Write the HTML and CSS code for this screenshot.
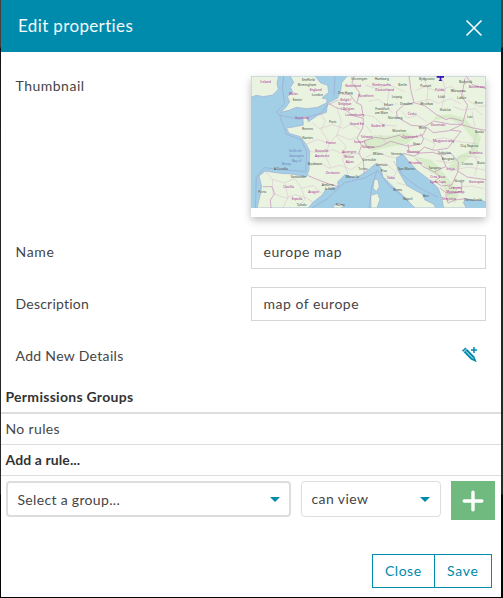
FILE: index.html
```html
<!DOCTYPE html>
<html lang="en">
<head>
<meta charset="utf-8">
<title>Edit properties</title>
<link rel="stylesheet" href="styles.css">
</head>
<body>
<main class="dialog">
  <header class="head">
    <h1>Edit properties</h1>
    <svg class="close" viewBox="0 0 18 18"><path d="M1.5 1.5l15 15M16.5 1.5l-15 15"/></svg>
  </header>
  <section class="fields">
    <div class="field field-thumb">
      <span class="thumbnail-label">Thumbnail</span>
      <div class="thumb">
        <svg class="map" viewBox="18 18 705 396" preserveAspectRatio="none">
          <rect class="sea" x="18" y="18" width="705" height="396"/>
          <g class="land">
            <path d="M306 18L290 38 287 62 278 84 248 99 244 127 218 136 190 155 184 138 173 139 175 165 150 170 124 174 132 190 166 200 184 224 194 243 192 300 184 320 140 312 106 310 61 303 42 318 50 350 45 377 36 414H190L204 397 232 375 242 359 280 350 278 336 300 314 332 325 356 310 372 298 391 282 407 292 414 320 441 347 475 377 500 404 510 414H574L564 401 540 390 531 371 514 363 486 347 469 319 457 297 454 264 474 252 489 272 517 302 558 333 580 355 590 385 596 414H664L655 397 665 386 690 392 710 391 723 397V18Z"/>
            <path d="M135 18L146 37 136 52 143 66 127 80 134 95 122 113 106 127 132 121 154 112 185 116 218 112 244 99 247 88 231 84 251 67 248 46 226 38 211 18Z"/>
            <path d="M18 18H101L96 40 100 58 83 75 55 80 34 76 18 82Z"/>
            <path d="M388 328L399 328 403 350 394 365 384 354ZM377 376L398 370 405 389 396 414H378ZM264 407L284 400 299 408 287 414H266Z"/>
          </g>
          <g class="hills">
            <path d="M358 213L386 195 433 197 479 186 512 202 485 222 434 230 382 242 356 229Z"/>
            <path d="M565 150L610 145 650 165 687 211 674 242 639 258 612 290 638 305 653 278 696 247 708 200 659 145 614 133 573 137Z"/>
            <path d="M480 252L515 265 556 306 586 321 606 380 630 400 642 370 603 318 560 270Z"/>
          </g>
          <g class="ferry">
            <path d="M116 18L112 55 119 100 94 126 104 136 165 148 228 130 247 105 281 90"/>
            <path d="M104 136L124 193 168 209 185 245 182 305 108 299 58 293 34 322 31 414M270 18L267 76M201 414L249 385 298 338 359 324 399 302 431 345 490 395"/>
            <path d="M445 273L476 318 520 352 579 382M396 302L380 350 373 414"/>
          </g>
          <g class="border">
            <path d="M250 100L274 113 303 121 324 137 355 145 353 174 336 204 350 226 341 250 355 271 358 311M187 316L218 329 249 341 281 350M54 350L81 350 89 371 76 390 78 414"/>
            <path d="M290 71L315 74 332 97 349 105 354 135M328 18L321 38 344 68 336 97M492 18L498 62 507 98 476 105 454 125 457 142 499 166 540 169 566 153 617 163 652 163 668 106 650 79 660 25"/>
            <path d="M507 98L539 107 572 132 603 149 618 144 653 153M356 213L391 202 420 207 462 196 480 206 534 195 545 172 565 188 613 182 650 164M356 213L370 235 408 228 437 214 490 229 529 222 536 206 526 190M489 222L492 246 520 247 538 231 568 241 608 235 648 184 616 180"/>
            <path d="M474 250L506 258 526 249 563 247 589 255 617 249 640 276 639 304 667 321 723 329M512 266L534 290 568 306 603 289 588 255M569 306L585 322 569 334 590 348 620 345 639 304M585 354L607 372 649 365 651 337M602 373L609 399 630 390 663 386M650 164L688 175 723 181M663 18L682 44 723 56"/>
          </g>
          <g class="region">
            <path d="M202 158L223 176 262 164 295 175 318 162 346 178M183 223L217 208 252 220 277 194 314 209 333 203M194 245L232 247 263 239 297 253 348 250M194 287L226 279 253 295 286 285 319 299 352 276M224 126L241 154 228 180 253 218 242 258 257 292M276 115L289 154 275 198 302 228 293 268 309 311"/>
            <path d="M61 303L82 328 117 338 150 326 170 354 205 347 232 371M82 328L84 371 123 384 151 374 185 384 204 397M120 339L129 382 113 414M169 355L180 387 157 414"/>
            <path d="M360 45L396 56 431 43 478 65M370 94L400 88 425 107 458 101M347 132L388 141 414 165 455 168M362 165L380 189M433 60L425 106 442 129M511 62L540 50 576 64 617 49 658 78M516 95L553 88 580 100 616 86 649 102M535 22L549 56 545 104M590 20L601 56 590 119M361 263L394 246 432 260 454 263M390 283L424 282 451 305M422 314L444 326 456 302M456 338L487 347M562 210L596 203 637 214 698 222M574 272L613 279 653 258 707 262M613 303L672 291 723 301M626 353L682 348 715 356M667 91L703 110 723 107M624 110L655 120 690 116 713 136M681 125L690 175M695 190L681 232 698 279 689 318M469 122L487 144 515 136 545 155M405 194L424 222M519 195L570 221 561 242"/>
          </g>
          <g class="town">
            <text x="170" y="32">Sheffield</text><text x="158" y="48">Birmingham</text><text x="200" y="79">London</text><text x="143" y="94">Exeter</text><text x="252" y="158">Paris</text><text x="171" y="180">Rennes</text><text x="172" y="206">Nantes</text><text x="188" y="286">Bordeaux</text><text x="87" y="300">A Coruña</text><text x="137" y="325">Santander</text><text x="40" y="368">Porto</text><text x="230" y="347">Andorra</text><text x="239" y="361">la Vella</text><text x="302" y="324">Marseille</text><text x="279" y="73">Den Haag</text><text x="319" y="30">Groningen</text><text x="389" y="30">Hamburg</text><text x="460" y="47">Berlin</text><text x="522" y="31">Bydgoszcz</text><text x="526" y="50">Poznań</text><text x="642" y="39">Białystok</text><text x="617" y="66">Warszawa</text><text x="440" y="84">Leipzig</text><text x="579" y="84">Łódź</text><text x="636" y="87">Lublin</text><text x="417" y="107">Erfurt</text><text x="465" y="106">Dresden</text><text x="526" y="104">Wrocław</text><text x="689" y="103">Rivne</text><text x="584" y="123">Kraków</text><text x="391" y="119">Frankfurt</text><text x="390" y="133">am Main</text><text x="429" y="148">Nürnberg</text><text x="666" y="143">Lviv</text><text x="521" y="177">Wien</text><text x="442" y="186">München</text><text x="690" y="189">Bacău</text><text x="504" y="224">Graz</text><text x="646" y="230">Cluj-Napoca</text><text x="384" y="254">Milano</text><text x="438" y="254">Venezia</text><text x="579" y="252">Subotica</text><text x="590" y="271">Beograd</text><text x="650" y="285">Craiova</text><text x="697" y="281">Bucu</text><text x="393" y="289">Genova</text><text x="407" y="307">Pisa</text><text x="460" y="300">San Marino</text><text x="551" y="298">Sarajevo</text><text x="628" y="336">Skopje</text><text x="445" y="363">Roma</text><text x="474" y="389">Napoli</text><text x="534" y="382">Bari</text><text x="656" y="392">Thessaloniki</text><text x="340" y="299">Torino</text><text x="352" y="272">Grenoble</text><text x="155" y="409">Toledo</text><text x="272" y="409">Palma</text>
          </g>
          <g class="country">
            <text x="46" y="38">Ireland</text><text x="132" y="74">Wales</text><text x="194" y="63">England</text><text x="150" y="146">Guernsey</text><text x="301" y="52">Nederland</text><text x="286" y="92">België /</text><text x="280" y="106">Belgique</text><text x="288" y="120">/ Belgien</text><text x="301" y="138">Luxembourg</text><text x="243" y="223">France</text><text x="210" y="247">Nouvelle-</text><text x="210" y="261">Aquitaine</text><text x="291" y="248">Auvergne</text><text x="298" y="263">Rhône</text><text x="302" y="278">Alpes</text><text x="242" y="311">Occitanie</text><text x="115" y="354">Castilla</text><text x="140" y="390">España</text><text x="190" y="368">Aragón</text><text x="348" y="205">Schweiz</text><text x="327" y="220">Suisse /</text><text x="351" y="235">Svizzera</text><text x="391" y="64">Deutschland</text><text x="382" y="47">Niedersachs.</text><text x="570" y="64">Polska</text><text x="488" y="135">Česko</text><text x="557" y="167">Slovensko</text><text x="472" y="204">Österreich</text><text x="564" y="215">Magyarország</text><text x="485" y="248">Slovenija</text><text x="491" y="281">Hrvatska</text><text x="604" y="299">Srbija</text><text x="673" y="253">România</text><text x="673" y="340">България</text><text x="427" y="328">Italia</text><text x="556" y="325">Crna Gora</text><text x="555" y="340">Црна Гора</text><text x="611" y="356">Северна</text><text x="604" y="370">Македонија</text><text x="591" y="389">Shqipëria</text><text x="340" y="82">Nordrhein</text><text x="314" y="166">Grand Est</text><text x="379" y="172">Baden-W.</text><text x="671" y="53">Волинська</text>
          </g>
          <g class="water"><text x="132" y="247">Golfe de</text><text x="132" y="261">Gascogne</text><text x="141" y="275">Bay of</text><text x="110" y="286">Biscay</text></g>
          <path class="marker" d="M575 18h22v5h-8v7l4 3h-13l4-3v-7h-9z"/>
        </svg>
      </div>
    </div>
    <div class="field"><span class="name-label">Name</span><div class="input"><span class="name-value">europe map</span></div></div>
    <div class="field"><span class="description-label">Description</span><div class="input"><span class="description-value">map of europe</span></div></div>
    <div class="field"><span class="details-label">Add New Details</span>
      <svg class="pencil" viewBox="0 0 18 18"><path d="M1 4.6 4.6 1.5 13.2 10.2 15.8 16.2 9.8 13.5Z"/><path class="cut" d="M2.2 6.2 5.8 2.9M5 5.3l7.1 7.2"/><path class="plus" d="M13 1v6M10 4h6"/></svg>
    </div>
  </section>
  <section class="rules">
    <div class="rule title"><b class="permissions">Permissions Groups</b></div>
    <div class="rule"><span class="none">No rules</span></div>
    <div class="rule"><b class="add-label">Add a rule...</b></div>
    <div class="controls">
      <div class="select group"><span class="group-value">Select a group...</span><i class="arrow"></i></div>
      <div class="select access"><span class="access-value">can view</span><i class="arrow"></i></div>
      <div class="add"><svg viewBox="0 0 22 22"><path d="M11 2.2v17.6M2.2 11h17.6"/></svg></div>
    </div>
  </section>
  <footer class="actions"><div class="button close-button"><span class="close-text">Close</span></div><div class="button save-button"><span class="save-text">Save</span></div></footer>
</main>
</body>
</html>
```
FILE: styles.css
```css
* { box-sizing: border-box; }
body {
  margin: 0;
  height: 598px;
  padding: 0 2px 1px 1px;
  overflow: hidden;
  background: linear-gradient(#44403e 0, #44403e 47px, #111 48px, #202124 150px, #292a2d 494px, #050505 495px);
  color: #454545;
  font: 14px/20px Lato, sans-serif;
}
.dialog { height: 597px; background: #fff; }
.head {
  height: 52px;
  padding: 0 18px 0 17px;
  display: flex;
  justify-content: space-between;
  background: #008aab;
  color: #f4fafc;
}
h1 { margin: 14px 0 0; font-size: 17px; line-height: 24px; font-weight: 400; letter-spacing: .36px; }
.close { width: 18px; height: 18px; margin-top: 19px; fill: none; stroke: #fff; stroke-width: 1.6; }
.fields { padding: 24px 15px 0 14.5px; }
.field { height: 52px; display: flex; justify-content: space-between; align-items: flex-start; line-height: 34px; }
.field-thumb { height: 159px; }
.field-thumb > span { line-height: 20px; }
.thumbnail-label { letter-spacing: .5px; }
.name-label { letter-spacing: .7px; }
.description-label { letter-spacing: .22px; }
.details-label { letter-spacing: .32px; }
.name-value { letter-spacing: .55px; }
.description-value { letter-spacing: .5px; }
.permissions { letter-spacing: .28px; }
.none { letter-spacing: .35px; }
.add-label { letter-spacing: .1px; }
.group-value { letter-spacing: .32px; }
.access-value { letter-spacing: .4px; }
.close-text { letter-spacing: .5px; }
.save-text { letter-spacing: .7px; }
.thumb { width: 235px; height: 141px; background: #fff; box-shadow: 0 3px 6px #0002, 0 4px 10px #0002; }
.map { display: block; width: 235px; height: 132px; }
.sea { fill: #a2cee6; }
.land { fill: #e9f3df; stroke: #a3b8d5; stroke-width: 2.5; }
.hills { fill: #cbe8b9; opacity: .55; }
.border, .region, .ferry { fill: none; stroke: #c68abd; stroke-width: 2; }
.region { stroke: #d8b5cf; stroke-width: 1.3; }
.ferry { stroke: #9997c9; stroke-width: 1.4; }
.town, .country, .water { font: 9.5px "Noto Sans", sans-serif; fill: #3f4942; }
.country { fill: #a82d94; }
.water { fill: #6680b6; }
.marker { fill: #3714b8; }
.input { width: 235px; height: 34px; padding-left: 11.5px; border: 1px solid #d6d6d6; line-height: 32px; }
.pencil { width: 18px; height: 18px; margin: 7px 7px 0 0; fill: #008aab; }
.cut { fill: none; stroke: #fff; stroke-width: .9; }
.plus { fill: none; stroke: #008aab; stroke-width: 1.5; }
.rules { margin-top: -9px; }
.rule { height: 31px; padding: 5px 0 0 4.5px; border-bottom: 1px solid #ddd; }
.rule b { color: #333; }
.title { height: 32px; padding-top: 5px; border-bottom-width: 2px; }
.controls { padding: 5px 6px 0 5px; display: flex; }
.select { height: 36px; border: 1px solid #ddd; border-radius: 4px; display: flex; align-items: center; justify-content: space-between; padding: 0 10px; }
.group { width: 285px; border-width: 2px; padding: 1px 9px 0 9.5px; }
.access { width: 140px; margin-left: 10px; padding-left: 9.5px; }
.arrow { border: 5px solid transparent; border-top-color: #008aab; border-bottom: 0; }
.add { width: 44px; height: 39px; margin-left: 10px; background: #71ba7f; display: grid; place-items: center; }
.add svg { width: 22px; height: 22px; fill: none; stroke: #fff; stroke-width: 3.4; stroke-linecap: round; }
.actions { display: flex; justify-content: flex-end; padding: 34px 9px 0 0; color: #008aab; }
.button { height: 34px; border: 1px solid #008aab; line-height: 32px; }
.close-button { width: 63px; padding-left: 12px; }
.save-button { width: 58px; padding-left: 12px; margin-left: -1px; }
```
